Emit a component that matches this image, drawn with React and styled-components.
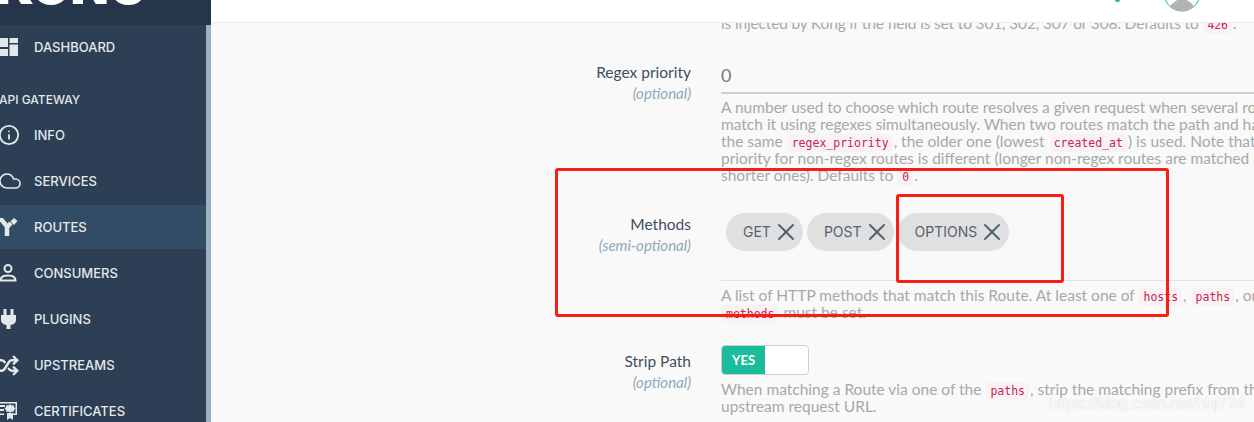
import React from "react";
import styled, { createGlobalStyle } from "styled-components";
import { Cloud, Info, Shuffle, X } from "lucide-react";

const GlobalStyle = createGlobalStyle`
  html, body {
    margin: 0;
    padding: 0;
    background: #f9f9f9;
  }
`;

const Page = styled.div`
  width: 1254px;
  height: 422px;
  display: flex;
  overflow: hidden;
  position: relative;
  font-family: "Lato", "Open Sans", sans-serif;
`;

const Sidebar = styled.aside`
  width: 211px;
  flex: none;
  display: flex;
  flex-direction: column;
`;

const Brand = styled.div`
  height: 25px;
  flex: none;
  overflow: hidden;
  background: #25364a;
`;

const BrandName = styled.div`
  margin: -39px 0 0 -4px;
  font-family: "Inter", sans-serif;
  font-size: 50px;
  line-height: 50px;
  font-weight: 900;
  color: #fff;
`;

const Nav = styled.nav`
  flex: 1;
  background: #2c3f55;
  border-right: 5px solid #9fb1bd;
`;

const NavItem = styled.div`
  height: 44px;
  margin-bottom: 2px;
  display: flex;
  align-items: center;
  background: ${(p) => (p.$active ? "#334c66" : "transparent")};
  color: #e4e8eb;
  font-family: "Inter", sans-serif;
  font-size: 13px;
  font-weight: 500;
  white-space: nowrap;
`;

const NavIcon = styled.span`
  width: 34px;
  flex: none;
  display: flex;
  align-items: center;
  margin-left: -2px;
  margin-right: 2px;
  color: #e4e8eb;
`;

const NavHeading = styled.div`
  height: 28px;
  margin-top: 16px;
  margin-left: -1px;
  display: flex;
  align-items: center;
  color: #e4e8eb;
  font-family: "Inter", sans-serif;
  font-size: 12px;
  font-weight: 500;
`;

const Main = styled.main`
  flex: 1;
  min-width: 0;
  display: flex;
  flex-direction: column;
  background: #f9f9f9;
`;

const Header = styled.header`
  height: 22px;
  flex: none;
  position: relative;
  z-index: 1;
  display: flex;
  justify-content: flex-end;
  background: #fff;
  border-bottom: 1px solid #ececec;
  padding-right: 53px;
`;

const StatusDot = styled.span`
  width: 5px;
  height: 2px;
  margin-right: 43px;
  border-radius: 0 0 3px 3px;
  background: #1abc9c;
`;

const Form = styled.div`
  margin-top: -8px;
`;

const Row = styled.div`
  display: grid;
  grid-template-columns: 480px 1fr;
  column-gap: 30px;
  margin-top: ${(p) => p.$top || 0}px;
`;

const LabelCol = styled.div`
  text-align: right;
  padding-top: ${(p) => p.$pad || 0}px;
`;

const LabelName = styled.div`
  font-size: 15.5px;
  line-height: 20px;
  color: #3e5060;
`;

const LabelNote = styled.div`
  margin-top: 1px;
  font-size: 15px;
  line-height: 20px;
  font-style: italic;
  color: #8fa8b8;
`;

const Field = styled.div`
  height: 30px;
  border-bottom: 2px solid #cfcfcf;
  color: #777;
  font-size: 18px;
  line-height: 26px;
`;

const ChipBox = styled.div`
  height: 67px;
  padding-left: 5px;
  display: flex;
  align-items: flex-start;
  gap: 4px;
  border-bottom: 1px solid #e2e2e2;
`;

const Chip = styled.span`
  height: 37px;
  padding: 0 3px 1px 17px;
  display: inline-flex;
  align-items: center;
  gap: 1px;
  border-radius: 19px;
  background: #e0e0e0;
  color: #53646f;
  font-family: "Inter", sans-serif;
  font-size: 14px;
`;

const Toggle = styled.div`
  width: 88px;
  height: 30px;
  box-sizing: border-box;
  display: flex;
  overflow: hidden;
  border: 1px solid #cfcfcf;
  border-radius: 4px;
  background: #fff;
`;

const ToggleOn = styled.span`
  width: 43px;
  display: flex;
  align-items: center;
  justify-content: center;
  background: #1abc9c;
  color: #fff;
  font-size: 13px;
  font-weight: 700;
`;

const Help = styled.div`
  margin-top: ${(p) => p.$top || 0}px;
  color: #a8a8a8;
  font-size: 15.5px;
  line-height: 17px;
`;

const Line = styled.div`
  white-space: nowrap;
  height: 17px;
  letter-spacing: ${(p) => (p.$tight ? "-0.16px" : "normal")};
`;

const Code = styled.code`
  padding: 2px 4px;
  margin: 0 1px;
  border-radius: 4px;
  background: #f9f2f4;
  color: #c7254e;
  font-family: "DejaVu Sans Mono", monospace;
  font-size: 11.5px;
`;

const RedBox = styled.div`
  position: absolute;
  left: ${(p) => p.$x}px;
  top: ${(p) => p.$y}px;
  width: ${(p) => p.$w}px;
  height: ${(p) => p.$h}px;
  box-sizing: border-box;
  border: 3px solid #fb1c12;
  border-radius: 3px;
  pointer-events: none;
`;

const Watermark = styled.div`
  position: absolute;
  right: 9px;
  top: 395px;
  color: rgba(255, 255, 255, 0.9);
  text-shadow: 0 0 1px rgba(170, 170, 170, 0.6);
  font-family: "Liberation Sans", sans-serif;
  font-size: 16px;
  line-height: 18px;
`;

const DashboardIcon = () => (
  <svg width="20" height="18" viewBox="0 0 20 18" fill="currentColor">
    <rect x="0" y="0" width="10" height="9" />
    <rect x="0" y="11" width="10" height="7" />
    <rect x="11.500" y="0" width="8.500" height="5" />
    <rect x="11.500" y="6.500" width="8.500" height="11.500" />
  </svg>
);

const RoutesIcon = () => (
  <svg width="20" height="18" viewBox="0 0 20 18" fill="none" stroke="currentColor" strokeWidth="4.500">
    <path d="M2 0l7 8.500V18" strokeLinejoin="round" />
    <path d="M9 9l4-4" />
    <path d="M12.500 3.500L16 0l3.500 3-3.500 4z" fill="currentColor" stroke="none" />
  </svg>
);

const ConsumerIcon = () => (
  <svg width="20" height="18" viewBox="0 0 20 18" fill="none" stroke="currentColor" strokeWidth="2">
    <circle cx="10" cy="4.500" r="3.500" />
    <path d="M2.500 16.500c0-3.500 3-5 7.500-5s7.500 1.500 7.500 5z" />
  </svg>
);

const PlugIcon = () => (
  <svg width="20" height="20" viewBox="0 0 20 20" fill="currentColor">
    <rect x="5.500" y="0" width="3" height="6" />
    <rect x="12.500" y="0" width="3" height="6" />
    <path d="M3 6h15v5c0 3-2.500 4.500-5.500 5v4h-4v-4C5.500 15.500 3 14 3 11z" />
  </svg>
);

const CertificateIcon = () => (
  <svg width="20" height="20" viewBox="0 0 20 20" fill="currentColor">
    <path d="M0 1h19v13h-4v-1.500h2.500v-10h-16v10H6V14H0z" />
    <rect x="2" y="4" width="5" height="2" />
    <rect x="2" y="8" width="4" height="2" />
    <path d="M12 3l1.500 1.500 2-.5.500 2 1.500 1.500-1.500 1.500-.5 2-2-.5L12 12l-1.500-1.500-2 .5-.5-2L6.500 7.500 8 6l.5-2 2 .5z" />
    <path d="M9 12h6v7l-3-2-3 2z" />
  </svg>
);

const Avatar = () => (
  <svg width="38" height="12" viewBox="0 26 38 12">
    <circle cx="19" cy="19" r="18" fill="#fff" stroke="#1abc9c" strokeWidth="1" />
    <path d="M7 33c1-4 7-6 8-8h8c1 2 7 4 8 8-3 2.500-7 4-12 4s-9-1.500-12-4z" fill="#b3b3b3" />
  </svg>
);

const navItems = [
  { label: "INFO", icon: <Info size={22} strokeWidth={2} /> },
  { label: "SERVICES", icon: <Cloud size={24} strokeWidth={1.6} /> },
  { label: "ROUTES", icon: <RoutesIcon />, active: true },
  { label: "CONSUMERS", icon: <ConsumerIcon /> },
  { label: "PLUGINS", icon: <PlugIcon /> },
  { label: "UPSTREAMS", icon: <Shuffle size={21} strokeWidth={2.8} /> },
  { label: "CERTIFICATES", icon: <CertificateIcon /> },
];

const methods = ["GET", "POST", "OPTIONS"];

const App = () => {
  return (
    <Page>
      <GlobalStyle />
      <Sidebar>
        <Brand>
          <BrandName>KONG</BrandName>
        </Brand>
        <Nav>
          <NavItem>
            <NavIcon><DashboardIcon /></NavIcon>
            DASHBOARD
          </NavItem>
          <NavHeading>API GATEWAY</NavHeading>
          {navItems.map((item) => (
            <NavItem key={item.label} $active={item.active}>
              <NavIcon>{item.icon}</NavIcon>
              {item.label}
            </NavItem>
          ))}
        </Nav>
      </Sidebar>
      <Main>
        <Header>
          <StatusDot />
          <Avatar />
        </Header>
        <Form>
          <Row>
            <div />
            <Help>
              <Line $tight>is injected by Kong if the field is set to 301, 302, 307 or 308. Defaults to <Code>426</Code>.</Line>
            </Help>
          </Row>
          <Row $top={30}>
            <LabelCol>
              <LabelName>Regex priority</LabelName>
              <LabelNote>(optional)</LabelNote>
            </LabelCol>
            <div>
              <Field>0</Field>
              <Help $top={5}>
                <Line>A number used to choose which route resolves a given request when several routes</Line>
                <Line>match it using regexes simultaneously. When two routes match the path and have</Line>
                <Line>the same <Code>regex_priority</Code>, the older one (lowest <Code>created_at</Code>) is used. Note that the</Line>
                <Line>priority for non-regex routes is different (longer non-regex routes are matched before</Line>
                <Line>shorter ones). Defaults to <Code>0</Code>.</Line>
              </Help>
            </div>
          </Row>
          <Row $top={29}>
            <LabelCol $pad={1}>
              <LabelName>Methods</LabelName>
              <LabelNote>(semi-optional)</LabelNote>
            </LabelCol>
            <div>
              <ChipBox>
                {methods.map((m) => (
                  <Chip key={m}>
                    {m}
                    <X size={28} strokeWidth={1.7} color="#53646f" />
                  </Chip>
                ))}
              </ChipBox>
              <Help $top={6}>
                <Line>A list of HTTP methods that match this Route. At least one of <Code>hosts</Code>, <Code>paths</Code>, or</Line>
                <Line><Code>methods</Code> must be set.</Line>
              </Help>
            </div>
          </Row>
          <Row $top={24}>
            <LabelCol $pad={6}>
              <LabelName>Strip Path</LabelName>
              <LabelNote>(optional)</LabelNote>
            </LabelCol>
            <div>
              <Toggle>
                <ToggleOn>YES</ToggleOn>
              </Toggle>
              <Help $top={6}>
                <Line>When matching a Route via one of the <Code>paths</Code>, strip the matching prefix from the</Line>
                <Line>upstream request URL.</Line>
              </Help>
            </div>
          </Row>
        </Form>
      </Main>
      <RedBox $x={555} $y={168} $w={614} $h={149} />
      <RedBox $x={896} $y={194} $w={168} $h={89} />
      <Watermark>https://blog.csdn.net/hhj724</Watermark>
    </Page>
  );
};

export default App;
